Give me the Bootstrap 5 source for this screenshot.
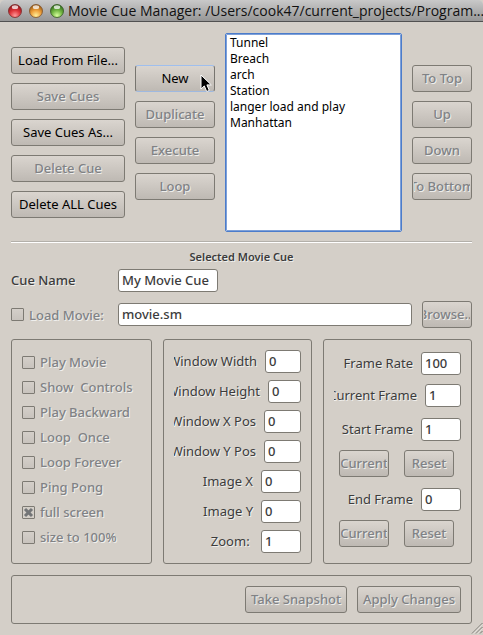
<!DOCTYPE html>
<html lang="en">
<head>
<meta charset="utf-8">
<meta name="viewport" content="width=device-width, initial-scale=1">
<title>Movie Cue Manager</title>
<link href="https://cdn.jsdelivr.net/npm/bootstrap@5.3.0/dist/css/bootstrap.min.css" rel="stylesheet">
<style>
  :root { --face: #d4cfc8; --edge: #7d7a73; --ink: #3c3c3c; --dim: #808285; }
  body { background: var(--face); color: var(--ink); font: 500 13px/20px "Noto Sans", sans-serif; }
  .titlebar { height: 22px; padding: 0 6px 0 8px; gap: 7px; color: #111;
    background: linear-gradient(#c9c9c9, #969696); border-bottom: 1px solid #515151; border-radius: 5px 5px 0 0; }
  .titlebar h1 { font: 400 14px/21px "Open Sans", sans-serif; margin: 0 0 0 -3px; min-width: 0; }
  .lamp { width: 14px; height: 14px; flex: none; }
  .content-area { padding: 11px 11px 10px; }
  .lists { gap: 10px; }
  .stack { gap: 9px; }
  .stack-files { width: 114px; padding-top: 14px; }
  .stack-cue { width: 80px; padding-top: 32px; }
  .stack-order { width: 60px; padding-top: 32px; }
  .push { height: 27px; padding: 0 1px 1px; border: 1px solid var(--edge); border-radius: 3px; color: #000;
    font-size: 13px; font-weight: 400; line-height: 24px; background: linear-gradient(#dad5cf, #beb9b3); flex: none; }
  .push span { display: flex; justify-content: center; overflow: hidden; white-space: nowrap; }
  .push:disabled { color: var(--dim); font-weight: 500; opacity: 1; border-color: var(--edge); text-shadow: 1px 1px 0 #eeeeec;
    background: linear-gradient(#dad5cf, #beb9b3); }
  .push-active { border-color: #9fbfee #77756f #9fb9e0; position: relative; }
  .pointer { position: absolute; left: 64px; top: 8px; width: 12px; height: 19px; }
  .cues { height: 199px; border: 1px solid #4b7ccb; outline: 1px solid #7ea0d8; outline-offset: -2px; border-radius: 2px;
    background: #fff; color: #000; padding: 0; font-size: 12px; font-weight: 500; overflow: hidden; min-width: 0; }
  .cues option { padding: 0 4px; height: 16px; min-height: 16px; line-height: 16px; }
  .rule { border: 0; border-top: 1px solid #b3b0aa; border-bottom: 1px solid #fff; opacity: 1; margin: 9px 0 6px; height: 2px; }
  .heading { font-size: 11px; font-weight: 600; line-height: 16px; margin: 0 0 4px; text-shadow: 1px 1px 0 #eeeeec; }
  .entry { height: 23px; padding: 0 2px 2px 3px; border: 1px solid var(--edge); border-radius: 3px; color: var(--ink);
    background: #fff; font-size: 13px; font-weight: 500; line-height: 19px; min-width: 0; flex: none; }
  .lead-col { width: 107px; }
  .caption { text-shadow: 1px 1px 0 #f0efed; white-space: nowrap; padding-bottom: 2px; }
  .off { color: var(--dim); padding-bottom: 0; }
  .tick { appearance: none; width: 13px; height: 13px; margin: 0; border: 1px solid var(--edge); border-radius: 1px;
    background: linear-gradient(#d4cfc9, #c8c3bd); flex: none; }
  .tick:checked { background: url("data:image/svg+xml,%3Csvg xmlns='http://www.w3.org/2000/svg' viewBox='0 0 11 11'%3E%3Cpath d='M2 2l7 7m0-7l-7 7' stroke='%23737577' stroke-width='3'/%3E%3C/svg%3E") center/11px; }
  .row-gap { gap: 5px; }
  .movie-row { margin-top: 9px; gap: 10px; }
  .movie-row .lead-col { margin-right: -10px; }
  .panels { display: grid; grid-template-columns: 141fr 149fr 149fr; gap: 11px; margin-top: 11px; }
  .frame { border: 1px solid var(--edge); border-radius: 3px; min-width: 0; }
  .frame-checks { padding: 12px 10px 10px; gap: 5px; }
  .frame-fields { padding: 10px; gap: 7px; }
  .frame-rate { padding: 12px 10px 10px; gap: 9px; }
  .marker { margin-top: 2px; }
  .pair { padding: 0 7px 0 5px; }
  .field { gap: 7px; }
  .field label { display: flex; justify-content: flex-end; overflow: hidden; flex: 1 1 0; min-width: 0; white-space: pre; padding-right: 1px; font-weight: 400; }
  .w-33 { width: 33px; } .w-36 { width: 36px; } .w-37 { width: 37px; } .w-40 { width: 40px; }
  .w-50px { width: 50px; } .w-name { width: 100px; } .w-shot { width: 102px; } .w-apply { width: 104px; }
  .actions { margin-top: 11px; padding: 10px; gap: 10px; }
  .grip { position: absolute; right: 0; bottom: 0; width: 12px; height: 12px; }
</style>
</head>
<body>
<div class="position-relative">
  <header class="titlebar d-flex align-items-center">
    <svg class="lamp" viewBox="0 0 14 14" aria-hidden="true"><defs>
      <radialGradient id="r" cx=".5" cy=".85" r=".8"><stop offset="0" stop-color="#ff9a9a"/><stop offset=".5" stop-color="#e0373c"/><stop offset="1" stop-color="#8c1216"/></radialGradient>
      <radialGradient id="y" cx=".5" cy=".85" r=".8"><stop offset="0" stop-color="#fff09a"/><stop offset=".5" stop-color="#f0a23c"/><stop offset="1" stop-color="#9a5a12"/></radialGradient>
      <radialGradient id="g" cx=".5" cy=".85" r=".8"><stop offset="0" stop-color="#d8ff9e"/><stop offset=".5" stop-color="#74b844"/><stop offset="1" stop-color="#2f6a1b"/></radialGradient>
      </defs><circle cx="7" cy="7" r="6.5" fill="url(#r)" stroke="#7a2a2a" stroke-width=".8"/><ellipse cx="7" cy="3.2" rx="3.2" ry="1.9" fill="#fff" opacity=".75"/></svg>
    <svg class="lamp" viewBox="0 0 14 14" aria-hidden="true"><circle cx="7" cy="7" r="6.5" fill="url(#y)" stroke="#7d5127" stroke-width=".8"/><ellipse cx="7" cy="3.2" rx="3.2" ry="1.9" fill="#fff" opacity=".75"/></svg>
    <svg class="lamp" viewBox="0 0 14 14" aria-hidden="true"><circle cx="7" cy="7" r="6.5" fill="url(#g)" stroke="#34591f" stroke-width=".8"/><ellipse cx="7" cy="3.2" rx="3.2" ry="1.9" fill="#fff" opacity=".75"/></svg>
    <h1 class="flex-fill text-nowrap">Movie Cue Manager: /Users/cook47/current_projects/Program...</h1>
  </header>

  <main class="content-area">
    <section class="lists d-flex">
      <div class="stack stack-files d-flex flex-column flex-shrink-0">
        <button type="button" class="btn push"><span>Load From File...</span></button>
        <button type="button" class="btn push" disabled><span>Save Cues</span></button>
        <button type="button" class="btn push"><span>Save Cues As...</span></button>
        <button type="button" class="btn push" disabled><span>Delete Cue</span></button>
        <button type="button" class="btn push"><span>Delete ALL Cues</span></button>
      </div>
      <div class="stack stack-cue d-flex flex-column flex-shrink-0">
        <button type="button" class="btn push push-active"><span>New</span>
          <svg class="pointer" viewBox="0 0 12 19" aria-hidden="true"><path d="M1 1v14l3.3-3.1 2.4 5.6 2.6-1.1-2.4-5.5h4.4z" fill="#000" stroke="#fff"/></svg>
        </button>
        <button type="button" class="btn push" disabled><span>Duplicate</span></button>
        <button type="button" class="btn push" disabled><span>Execute</span></button>
        <button type="button" class="btn push" disabled><span>Loop</span></button>
      </div>
      <select class="cues flex-fill" size="12" aria-label="Movie cues">
        <option>Tunnel</option>
        <option>Breach</option>
        <option>arch</option>
        <option>Station</option>
        <option>langer load and play</option>
        <option>Manhattan</option>
      </select>
      <div class="stack stack-order d-flex flex-column flex-shrink-0">
        <button type="button" class="btn push" disabled><span>To Top</span></button>
        <button type="button" class="btn push" disabled><span>Up</span></button>
        <button type="button" class="btn push" disabled><span>Down</span></button>
        <button type="button" class="btn push" disabled><span>To Bottom</span></button>
      </div>
    </section>

    <hr class="rule">
    <h2 class="heading text-center">Selected Movie Cue</h2>

    <div class="d-flex align-items-center">
      <label class="lead-col caption" for="name">Cue Name</label>
      <input class="entry w-name" id="name" type="text" value="My Movie Cue">
    </div>
    <div class="movie-row d-flex align-items-center">
      <div class="lead-col row-gap d-flex align-items-center flex-shrink-0">
        <input class="tick" id="load" type="checkbox" disabled>
        <label class="caption off" for="load">Load Movie:</label>
      </div>
      <input class="entry flex-fill" type="text" value="movie.sm" aria-label="Movie file">
      <button type="button" class="btn push w-50px" disabled><span>Browse...</span></button>
    </div>

    <section class="panels">
      <div class="frame frame-checks d-flex flex-column">
        <div class="row-gap d-flex align-items-center"><input class="tick" id="c1" type="checkbox" disabled><label class="caption off" for="c1">Play Movie</label></div>
        <div class="row-gap d-flex align-items-center"><input class="tick" id="c2" type="checkbox" disabled><label class="caption off" for="c2">Show&nbsp; Controls</label></div>
        <div class="row-gap d-flex align-items-center"><input class="tick" id="c3" type="checkbox" disabled><label class="caption off" for="c3">Play Backward</label></div>
        <div class="row-gap d-flex align-items-center"><input class="tick" id="c4" type="checkbox" disabled><label class="caption off" for="c4">Loop&nbsp; Once</label></div>
        <div class="row-gap d-flex align-items-center"><input class="tick" id="c5" type="checkbox" disabled><label class="caption off" for="c5">Loop Forever</label></div>
        <div class="row-gap d-flex align-items-center"><input class="tick" id="c6" type="checkbox" disabled><label class="caption off" for="c6">Ping Pong</label></div>
        <div class="row-gap d-flex align-items-center"><input class="tick" id="c7" type="checkbox" disabled checked><label class="caption off" for="c7">full screen</label></div>
        <div class="row-gap d-flex align-items-center"><input class="tick" id="c8" type="checkbox" disabled><label class="caption off" for="c8">size to 100%</label></div>
      </div>

      <div class="frame frame-fields d-flex flex-column">
        <div class="field d-flex align-items-center"><label class="caption" for="ww">Window Width</label><input class="entry w-36" id="ww" type="text" value="0"></div>
        <div class="field d-flex align-items-center"><label class="caption" for="wh">Window Height</label><input class="entry w-33" id="wh" type="text" value="0"></div>
        <div class="field d-flex align-items-center"><label class="caption" for="wx">Window X Pos</label><input class="entry w-37" id="wx" type="text" value="0"></div>
        <div class="field d-flex align-items-center"><label class="caption" for="wy">Window Y Pos</label><input class="entry w-37" id="wy" type="text" value="0"></div>
        <div class="field d-flex align-items-center"><label class="caption" for="ix">Image X</label><input class="entry w-40" id="ix" type="text" value="0"></div>
        <div class="field d-flex align-items-center"><label class="caption" for="iy">Image Y</label><input class="entry w-40" id="iy" type="text" value="0"></div>
        <div class="field d-flex align-items-center"><label class="caption" for="zm">Zoom: </label><input class="entry w-40" id="zm" type="text" value="1"></div>
      </div>

      <div class="frame frame-rate d-flex flex-column">
        <div class="field d-flex align-items-center"><label class="caption" for="fr">Frame Rate</label><input class="entry w-40" id="fr" type="text" value="100"></div>
        <div class="field d-flex align-items-center"><label class="caption" for="cf">Current Frame</label><input class="entry w-36" id="cf" type="text" value="1"></div>
        <div class="field marker d-flex align-items-center"><label class="caption" for="sf">Start Frame</label><input class="entry w-40" id="sf" type="text" value="1"></div>
        <div class="pair d-flex justify-content-between"><button type="button" class="btn push w-50px" disabled><span>Current</span></button><button type="button" class="btn push w-50px" disabled><span>Reset</span></button></div>
        <div class="field marker d-flex align-items-center"><label class="caption" for="ef">End Frame</label><input class="entry w-40" id="ef" type="text" value="0"></div>
        <div class="pair d-flex justify-content-between"><button type="button" class="btn push w-50px" disabled><span>Current</span></button><button type="button" class="btn push w-50px" disabled><span>Reset</span></button></div>
      </div>
    </section>

    <section class="frame actions d-flex justify-content-end">
      <button type="button" class="btn push w-shot" disabled><span>Take Snapshot</span></button>
      <button type="button" class="btn push w-apply" disabled><span>Apply Changes</span></button>
    </section>
  </main>
  <svg class="grip" viewBox="0 0 12 12" aria-hidden="true"><path d="M1 11.5L11.5 1M5 11.5L11.5 5M9 11.5L11.5 9" stroke="#77746e"/><path d="M2.2 11.5L11.5 2.2M6.2 11.5L11.5 6.2" stroke="#f4f2ef" stroke-width=".7"/></svg>
</div>
<script src="https://cdn.jsdelivr.net/npm/bootstrap@5.3.0/dist/js/bootstrap.bundle.min.js"></script>
</body>
</html>
